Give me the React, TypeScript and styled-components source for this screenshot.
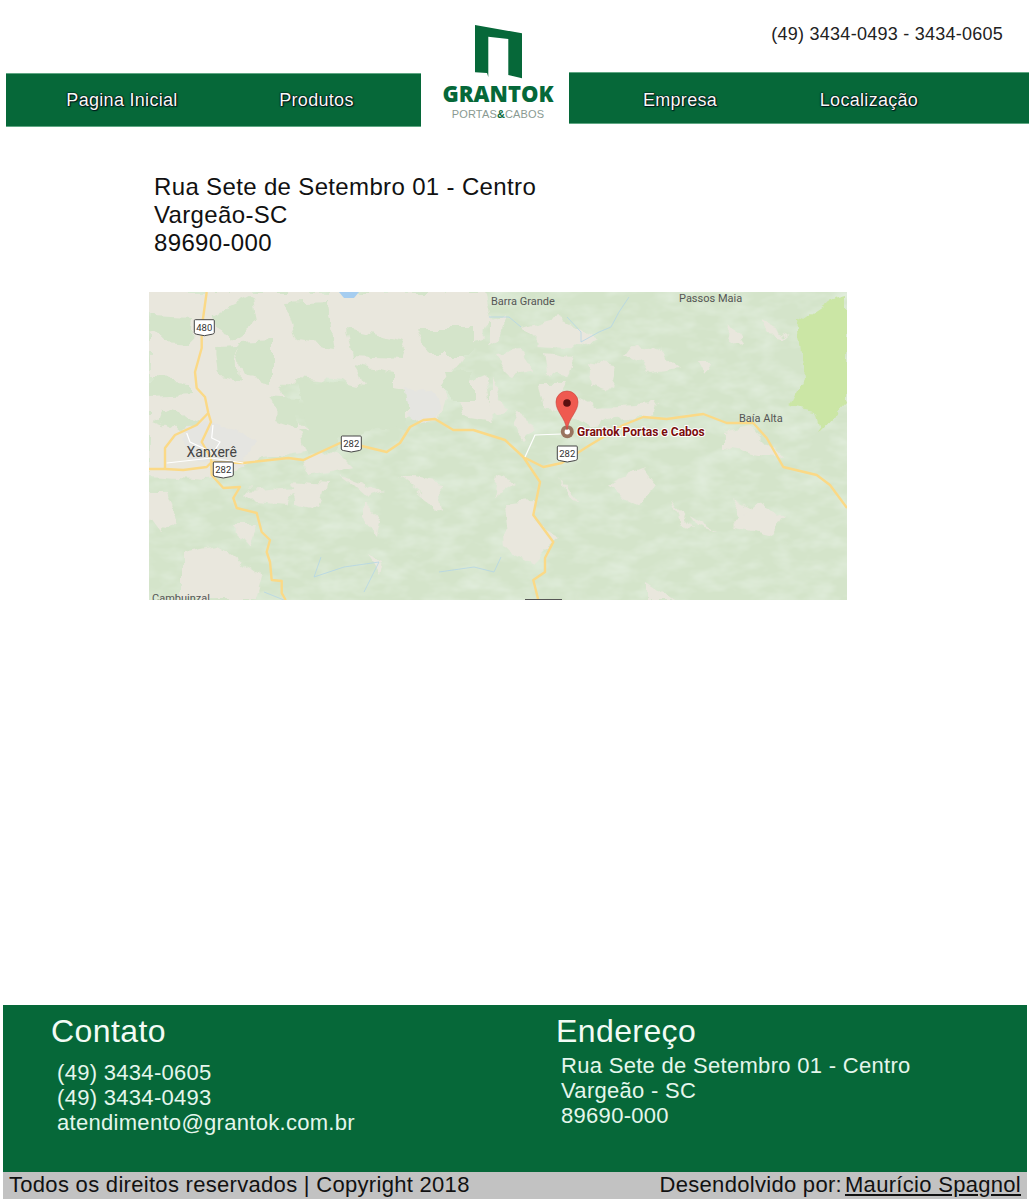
import { createGlobalStyle, styled } from "styled-components"

const GlobalStyle = createGlobalStyle`
  html, body {
    margin: 0;
    padding: 0;
    background: #fff;
  }
  body {
    font-family: "Liberation Sans", Arial, sans-serif;
  }
`

const green = "#066839"

const Page = styled.div`
  width: 1029px;
  height: 1201px;
  display: flex;
  flex-direction: column;
  overflow: hidden;
`

const Header = styled.header`
  display: grid;
  grid-template-columns: 415px 148px 460px;
  padding-left: 6px;
  height: 127px;
  flex: none;
`

const NavBar = styled.nav<{ $h: number; $pad: number }>`
  align-self: end;
  display: flex;
  align-items: center;
  height: ${(p) => p.$h}px;
  padding-top: ${(p) => p.$pad}px;
  background: ${green};
  border: 1px solid #5fa783;
  border-width: 1px 0;
  box-sizing: border-box;
`

const NavLink = styled.a<{ $w: number }>`
  width: ${(p) => p.$w}px;
  text-align: center;
  font-size: 18px;
  letter-spacing: 0.3px;
  color: #f6fbf8;
  text-shadow: 0 0 1px #000, 0 0 1px #000, 0 0 2px #012, 1px 1px 1px #022;
`

const Logo = styled.div`
  display: flex;
  flex-direction: column;
  align-items: center;
  padding: 25px 0 0 6px;
`

const LogoName = styled.div`
  margin-top: 1px;
  font-family: "Open Sans", sans-serif;
  font-weight: 800;
  font-size: 22px;
  line-height: 26px;
  color: ${green};
`

const LogoSub = styled.div`
  margin-top: 3px;
  font-size: 11px;
  letter-spacing: 0.15px;
  line-height: 11px;
  color: #8a9a92;
  b {
    color: ${green};
  }
`

const HeaderRight = styled.div`
  display: flex;
  flex-direction: column;
  justify-content: space-between;
  height: 124px;
  ${NavBar} {
    align-self: stretch;
  }
`

const Phone = styled.div`
  padding-top: 24px;
  padding-right: 26px;
  text-align: right;
  font-size: 18px;
  letter-spacing: 0.25px;
  line-height: 20px;
  color: #222;
`

const Main = styled.main`
  flex: 1;
  display: flex;
  flex-direction: column;
  padding: 46px 0 0 149px;
`

const Address = styled.p`
  margin: 0 0 35px 5px;
  font-size: 24px;
  letter-spacing: 0.35px;
  line-height: 28px;
  color: #111;
`

const MapFrame = styled.svg`
  display: block;
  width: 698px;
  height: 308px;
`

const Footer = styled.footer`
  flex: none;
  margin: 0 2px 2px 3px;
`

const FooterMain = styled.div`
  display: grid;
  grid-template-columns: 505px 1fr;
  height: 167px;
  background: ${green};
  color: #e4f6ec;
`

const FooterColumn = styled.div`
  padding: 8px 0 0 48px;
`

const FooterTitle = styled.h2`
  margin: 0;
  font-size: 32px;
  letter-spacing: 0.4px;
  line-height: 36px;
  font-weight: normal;
  color: #f2fbf5;
`

const FooterText = styled.div<{ $top: number; $left: number }>`
  margin: ${(p) => p.$top}px 0 0 ${(p) => p.$left}px;
  font-size: 22px;
  letter-spacing: 0.3px;
  line-height: 25px;
`

const BottomBar = styled.div`
  display: flex;
  justify-content: space-between;
  height: 27px;
  padding: 0 6px;
  background: #c2c2c2;
  font-size: 22px;
  letter-spacing: 0.3px;
  line-height: 26px;
  color: #111;
`

const Credit = styled.a`
  margin-left: 3px;
  color: #111;
  text-decoration: underline;
`

function Shield({ x, y, n }: { x: number; y: number; n: string }) {
  return (
    <g transform={`translate(${x} ${y})`}>
      <path
        d="M-10 -7 Q-10 -8 -9 -8 H9 Q10 -8 10 -7 V5 Q10 6 8 6.5 L0 8 L-8 6.5 Q-10 6 -10 5 Z"
        fill="#fff"
        stroke="#444"
        strokeWidth="1"
      />
      <text x="0" y="3" textAnchor="middle" fontFamily="Roboto, sans-serif" fontSize="9.5" fill="#333">
        {n}
      </text>
    </g>
  )
}

const beige = [
  "0,0 335,0 342,30 318,60 300,85 290,122 252,128 238,106 190,88 150,84 132,100 150,130 175,148 150,160 95,170 60,186 0,182",
  "0,200 18,200 28,226 11,240 0,226",
  "94,200 148,196 138,213 104,210",
  "141,190 178,193 171,216 148,210",
  "191,183 234,200 218,206 204,193",
  "251,186 291,193 294,220 268,200",
  "84,233 108,233 101,253",
  "214,213 231,226 228,243 214,226",
  "218,263 234,270 231,283",
  "34,260 68,253 114,286 108,308 34,308",
  "341,30 358,23 351,43 341,50",
  "374,36 408,26 448,46 428,56 391,53",
  "484,53 508,56 531,76 501,80 474,66",
  "546,68 563,68 555,85",
  "611,30 641,43 618,40",
  "581,30 594,50 578,53",
  "341,86 361,116 341,123",
  "391,93 418,93 414,100 448,116 508,113 504,123 464,126 448,136 424,126 398,116",
  "368,123 388,136 374,150 361,136",
  "348,183 368,190 344,206",
  "354,213 384,210 384,230 411,246 398,256 384,270 358,256",
  "458,190 494,176 508,193 491,213 468,200",
  "408,183 431,210 421,206",
  "524,206 544,236 534,233",
  "541,223 568,240 548,233",
  "581,206 608,220 594,226",
  "614,210 634,226 624,243 581,233",
  "574,140 604,133 634,166 608,163 574,156",
  "498,290 524,308 498,308",
  "300,100 335,85 345,130 315,125",
  "150,170 190,160 205,175 160,185",
  "345,62 372,58 385,78 360,84",
  "395,62 425,66 418,86 398,82",
  "440,70 468,74 462,98 444,92",
]

const greenPatches = [
  "0,23 44,25 42,50 12,48 0,40",
  "64,23 102,5 106,30 80,48",
  "134,10 178,8 186,56 148,50",
  "198,37 258,50 252,66 204,64",
  "265,36 324,36 324,62 280,62",
  "208,73 244,80 244,100 218,100",
  "65,56 90,55 92,90 68,85",
  "88,50 124,48 124,90 98,85",
  "0,88 44,90 44,102 0,104",
  "118,106 148,108 148,135 128,128",
  "144,86 258,100 258,143 230,135 200,145 160,140",
  "294,80 324,80 324,110 300,110",
  "10,115 50,130 30,140 5,130",
  "150,138 190,140 185,160 160,165",
]

const roads = [
  "57.7,0 52.7,36 52.7,56 46,80 47.7,96 56,105 59.3,121 62,130 52.7,150 62,166 62.7,183 74.3,196 91,195 84.3,206 87.7,216 107.7,221 112.7,240 121,248 117.7,260 121,270 122.7,288 132.7,289 132.7,301 136.7,308",
  "0,177 16,177 34.3,178 57.7,175 62.7,170 94.3,171 139.3,166 154.3,168 191,151 212.7,154 237.7,160 251,151 261,135 274.3,128 286,127 304.3,138 324.3,138 356,148 374.3,165 394.3,175 412.7,171 441,153 457.7,143 474.3,133 494.3,125 517.7,127 554.3,122 577.7,131 604.3,131 617.7,146 634.3,175 667.7,183 681,193 698,216",
  "374.3,165 391,190 384.3,223 404.3,250 396,266 396,280 384.3,288 389.3,308",
  "16,177 16,156 26,143 47.7,133 59.3,121",
]

const streets = [
  "17.7,171 62.7,166 94.3,171",
  "37.7,141 41,150 62.7,160",
  "64,133 62.7,146 71,150 62.7,163",
  "412.7,142 386,143 376,165",
]

const rivers = [
  "418,25 432,40 432,50 450,40 462,35 470,20 480,5",
  "340,25 360,25 372,35",
  "172,265 165,285 195,275 230,270 215,300",
  "290,280 325,275 345,280 352,265",
  "115,300 135,308",
]

function GoogleMap() {
  return (
    <MapFrame viewBox="0 0 698 308" role="img" aria-label="Mapa">
      <defs>
        <filter id="organic" x="-5%" y="-5%" width="110%" height="110%">
          <feTurbulence type="fractalNoise" baseFrequency="0.05" numOctaves="3" seed="4" result="noise" />
          <feDisplacementMap in="SourceGraphic" in2="noise" scale="16" xChannelSelector="R" yChannelSelector="G" />
        </filter>
        <filter id="ridges" x="0" y="0" width="100%" height="100%">
          <feTurbulence type="fractalNoise" baseFrequency="0.035 0.07" numOctaves="3" seed="9" />
          <feColorMatrix values="0 0 0 0 0.77  0 0 0 0 0.86  0 0 0 0 0.74  1.6 0 0 0 -0.62" />
        </filter>
      </defs>
      <rect width="698" height="308" fill="#d4e4ca" />
      <rect width="698" height="308" filter="url(#ridges)" />
      <g filter="url(#organic)">
        {beige.map((p) => (
          <polygon key={p} points={p} fill="#e9e7dd" />
        ))}
        {greenPatches.map((p) => (
          <polygon key={p} points={p} fill="#d4e4ca" />
        ))}
        <polygon points="35,135 75,132 105,150 95,172 40,170" fill="#e5e5e1" />
        <polygon points="255,95 285,100 290,125 262,130" fill="#e5e5e1" />
        <polygon points="650,30 680,10 698,5 698,110 670,140 665,120 640,115 655,85" fill="#cbe6a5" />
      </g>
      <polygon points="190,0 210,0 205,6 195,6" fill="#a5cdf0" />
      {rivers.map((p) => (
        <polyline key={p} points={p} fill="none" stroke="#b4d5e6" strokeWidth="0.8" />
      ))}
      {roads.map((p) => (
        <polyline key={p} points={p} fill="none" stroke="#fbd986" strokeWidth="2.4" strokeLinejoin="round" />
      ))}
      {streets.map((p) => (
        <polyline key={p} points={p} fill="none" stroke="#fff" strokeWidth="1.2" />
      ))}
      <Shield x={55.3} y={35.7} n="480" />
      <Shield x={202.3} y={152} n="282" />
      <Shield x={74.3} y={178} n="282" />
      <Shield x={418.3} y={162} n="282" />
      <rect x="376" y="307" width="37" height="1" fill="#555" />
      <g fontFamily="Roboto, sans-serif" fill="#555">
        <text x="37.5" y="165" fontSize="14" fill="#444">
          Xanxerê
        </text>
        <text x="342" y="12.5" fontSize="11">
          Barra Grande
        </text>
        <text x="530" y="9.5" fontSize="11">
          Passos Maia
        </text>
        <text x="590" y="129.5" fontSize="11">
          Baía Alta
        </text>
        <text x="3" y="310" fontSize="11">
          Cambuinzal
        </text>
      </g>
      <circle cx="418.3" cy="139.7" r="6.5" fill="#9a7560" />
      <circle cx="418.3" cy="139.7" r="2.7" fill="#fff" />
      <path
        d="M418 138 C416 125 407 120 407 110 A11 11 0 0 1 429 110 C429 120 420 125 418 138 Z"
        fill="#ef5a50"
        stroke="#c8403a"
        strokeWidth="0.6"
      />
      <circle cx="418" cy="111" r="3.8" fill="#5a0f0f" />
      <text
        x="428"
        y="144"
        fontFamily="Roboto, sans-serif"
        fontSize="12"
        fontWeight="700"
        fill="#7a0c0c"
        stroke="#fff"
        strokeWidth="2"
        paintOrder="stroke"
      >
        Grantok Portas e Cabos
      </text>
    </MapFrame>
  )
}

export default function App() {
  return (
    <Page>
      <GlobalStyle />
      <Header>
        <NavBar $h={54} $pad={0}>
          <NavLink $w={232}>Pagina Inicial</NavLink>
          <NavLink $w={157}>Produtos</NavLink>
        </NavBar>
        <Logo>
          <svg width="48" height="54" viewBox="0 0 48 54">
            <path d="M1 0 L48 8.3 V53.3 L34.3 50 V14 L14.3 11.7 V52 L13 48 L1 47.3 Z" fill={green} />
          </svg>
          <LogoName>GRANTOK</LogoName>
          <LogoSub>
            PORTAS<b>&amp;</b>CABOS
          </LogoSub>
        </Logo>
        <HeaderRight>
          <Phone>(49) 3434-0493 - 3434-0605</Phone>
          <NavBar $h={52} $pad={4}>
            <NavLink $w={222}>Empresa</NavLink>
            <NavLink $w={156}>Localização</NavLink>
          </NavBar>
        </HeaderRight>
      </Header>
      <Main>
        <Address>
          Rua Sete de Setembro 01 - Centro
          <br />
          Vargeão-SC
          <br />
          89690-000
        </Address>
        <GoogleMap />
      </Main>
      <Footer>
        <FooterMain>
          <FooterColumn>
            <FooterTitle>Contato</FooterTitle>
            <FooterText $top={11} $left={6}>
              (49) 3434-0605
              <br />
              (49) 3434-0493
              <br />
              atendimento@grantok.com.br
            </FooterText>
          </FooterColumn>
          <FooterColumn>
            <FooterTitle>Endereço</FooterTitle>
            <FooterText $top={4} $left={5}>
              Rua Sete de Setembro 01 - Centro
              <br />
              Vargeão - SC
              <br />
              89690-000
            </FooterText>
          </FooterColumn>
        </FooterMain>
        <BottomBar>
          <span>Todos os direitos reservados | Copyright 2018</span>
          <span>
            Desendolvido por:<Credit>Maurício Spagnol</Credit>
          </span>
        </BottomBar>
      </Footer>
    </Page>
  )
}
